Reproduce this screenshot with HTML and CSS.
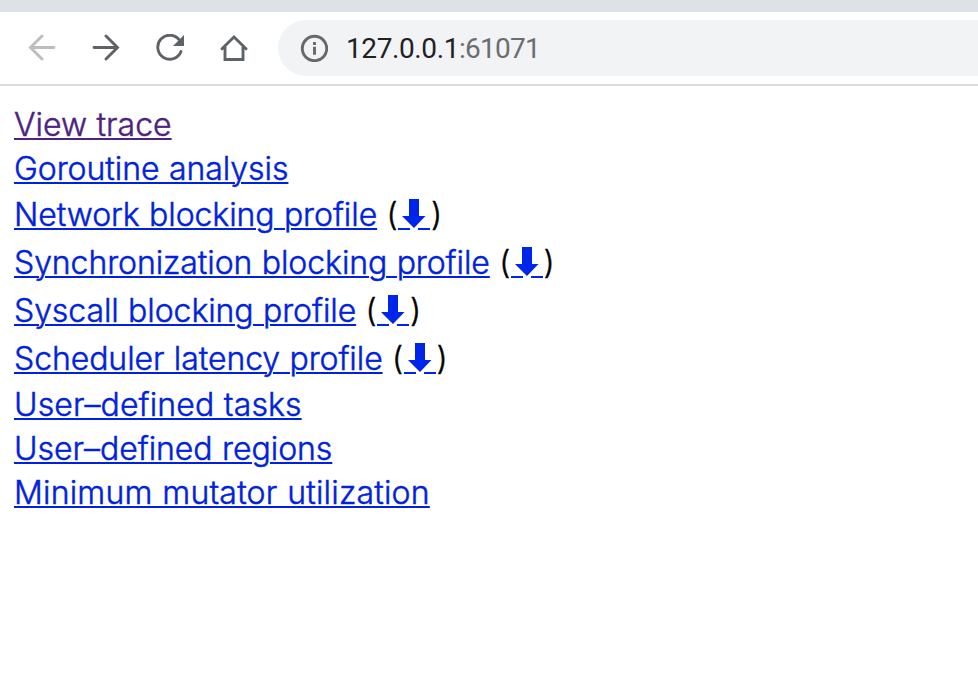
FILE: index.html
```
<!DOCTYPE html>
<html lang="en">
<head>
<meta charset="utf-8">
<title>127.0.0.1:61071</title>
<link rel="stylesheet" href="styles.css">
</head>
<body>
<svg class="defs" width="0" height="0" aria-hidden="true">
  <symbol id="down" viewBox="0 0 32 34">
    <path d="M11 2h10v17h6.500L16 31 4 19h7z"/>
    <path d="M0 31h12v2H0zM20 31h12v2H20z"/>
  </symbol>
</svg>
<div class="tabstrip"></div>
<header class="toolbar">
  <nav class="buttons">
    <svg class="icon back" viewBox="0 0 28 28"><path d="M26 13.500H3M14 2 2.500 13.500 14 25"/></svg>
    <svg class="icon" viewBox="0 0 28 28"><path d="M2 13.500h23M14 2 25.500 13.500 14 25"/></svg>
    <svg class="icon" viewBox="0 0 28 28"><path d="M23.400 6A12 12 0 1 0 25 17.500"/><path class="solid" d="M28 1v11H17z"/></svg>
    <svg class="icon" viewBox="0 0 28 28"><path d="M2 14.800 14 3l12 11.800M5 13v12.500h18V13"/></svg>
  </nav>
  <div class="omnibox">
    <svg class="icon info" viewBox="0 0 28 28"><circle cx="14.500" cy="14.500" r="12.200"/><path d="M14.500 12.700v8M14.500 8v3"/></svg>
    <span class="url"><span class="host">127.0.0.1</span><span class="port">:61071</span></span>
  </div>
</header>
<main>
  <div class="row view"><a class="visited" href="#">View trace</a></div>
  <div class="row goroutine"><a href="#">Goroutine analysis</a></div>
  <div class="row tall"><a href="#">Network blocking profile</a> (<a class="dl" href="#" aria-label="Download"><svg><use href="#down"/></svg></a>)</div>
  <div class="row tall"><a href="#">Synchronization blocking profile</a> (<a class="dl" href="#" aria-label="Download"><svg><use href="#down"/></svg></a>)</div>
  <div class="row tall"><a href="#">Syscall blocking profile</a> (<a class="dl" href="#" aria-label="Download"><svg><use href="#down"/></svg></a>)</div>
  <div class="row tall"><a href="#">Scheduler latency profile</a> (<a class="dl" href="#" aria-label="Download"><svg><use href="#down"/></svg></a>)</div>
  <div class="row tasks"><a href="#">User–defined tasks</a></div>
  <div class="row regions"><a href="#">User–defined regions</a></div>
  <div class="row minimum"><a href="#">Minimum mutator utilization</a></div>
</main>
</body>
</html>
```

FILE: styles.css
```
body {
  margin: 0;
  background: #fff;
  color: #000;
  overflow: hidden;
}
.defs { position: absolute; }
.tabstrip {
  height: 12px;
  background: #dee1e6;
}
.toolbar {
  display: flex;
  align-items: center;
  box-sizing: border-box;
  height: 74px;
  padding-left: 28px;
  border-bottom: 2px solid #dadbdc;
}
.buttons {
  display: flex;
  gap: 36px;
  margin-right: 30px;
}
.icon {
  display: block;
  flex: none;
  width: 28px;
  height: 28px;
  fill: none;
  stroke: #5f6368;
  stroke-width: 2.9;
  stroke-linecap: round;
}
.icon .solid {
  fill: #5f6368;
  stroke: none;
}
.back { stroke: #bdbdbd; }
.info {
  stroke: #66696c;
  stroke-linecap: butt;
}
.omnibox {
  flex: 1;
  display: flex;
  align-items: center;
  gap: 18px;
  height: 56px;
  padding-left: 22px;
  border-radius: 28px 0 0 28px;
  background: #f1f3f4;
}
.url {
  padding-top: 2px;
  font: 28px/54px Roboto, sans-serif;
  white-space: nowrap;
}
.host {
  color: #202124;
  letter-spacing: -0.4px;
}
.port {
  color: #6b6e71;
  letter-spacing: -0.75px;
}
main {
  padding: 17px 14px;
  font: 300 32px/44px Inter, sans-serif;
}
.row {
  height: 44px;
  white-space: nowrap;
  word-spacing: 0.5px;
  letter-spacing: -0.08px;
  -webkit-text-stroke: 0.5px currentColor;
}
.tall {
  height: 48px;
  line-height: 48px;
}
.view { letter-spacing: 0; }
.goroutine { letter-spacing: -0.05px; }
.tasks { letter-spacing: 0.1px; }
.regions { letter-spacing: -0.04px; }
.minimum { letter-spacing: 0.19px; }
a {
  color: #0022dc;
  text-decoration: underline;
  text-decoration-thickness: 2px;
  text-underline-offset: 2px;
}
.visited { color: #4c2480; }
.dl { text-decoration: none; }
.dl svg {
  display: inline-block;
  width: 32px;
  height: 34px;
  margin: 0 0.5px -5px 0.8px;
  vertical-align: baseline;
  fill: #0025ea;
  stroke: none;
}
```
